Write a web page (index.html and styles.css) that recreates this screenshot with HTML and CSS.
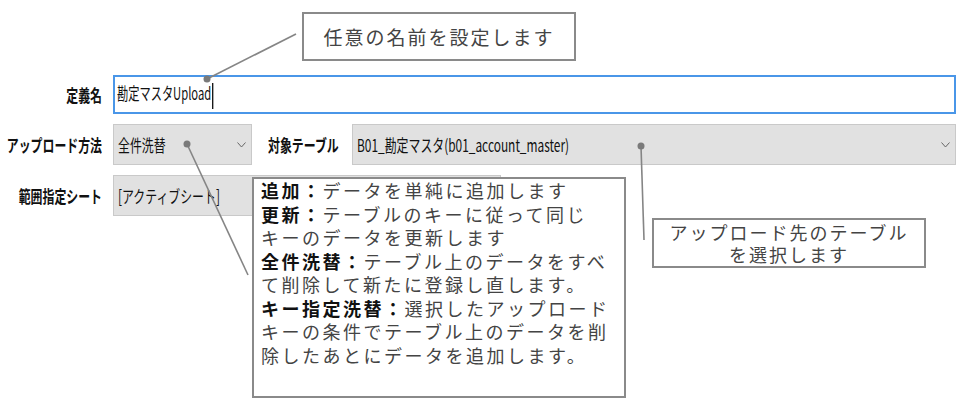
FILE: index.html
```html
<!DOCTYPE html>
<html lang="ja">
<head>
  <meta charset="UTF-8" />
  <meta name="viewport" content="width=device-width, initial-scale=1.0"/>
  <title>アップロード定義</title>
  <link rel="stylesheet" href="styles.css">
</head>
<body>
  <div class="page">
    <div class="form">
      <div class="label"><span class="narrow">定義名</span></div>
      <div class="field field-text">
        <span class="narrow">勘定マスタUpload<span class="caret"></span></span>
      </div>

      <div class="label"><span class="narrow">アップロード方法</span></div>
      <div class="field-row">
        <div class="field select select-mode">
          <span class="narrow">全件洗替</span>
          <svg class="chevron" width="9" height="6" viewBox="0 0 9 6"><path d="M0.5 0.5 L4.5 5 L8.5 0.5" fill="none" stroke="#666" stroke-width="1"/></svg>
        </div>
        <div class="label-inline"><span class="narrow">対象テーブル</span></div>
        <div class="field select select-table">
          <span class="narrow">B01_勘定マスタ(b01_account_master)</span>
          <svg class="chevron" width="9" height="6" viewBox="0 0 9 6"><path d="M0.5 0.5 L4.5 5 L8.5 0.5" fill="none" stroke="#666" stroke-width="1"/></svg>
        </div>
      </div>

      <div class="label"><span class="narrow">範囲指定シート</span></div>
      <div class="field-row">
        <div class="field select select-sheet">
          <span class="narrow">[アクティブシート]</span>
        </div>
      </div>
    </div>

    <!-- callouts -->
    <div class="note note-name">任意の名前を設定します</div>

    <div class="note note-mode">
      <b>追加：</b>データを単純に追加します<br>
      <b>更新：</b>テーブルのキーに従って同じ<br>
      キーのデータを更新します<br>
      <b>全件洗替：</b>テーブル上のデータをすべ<br>
      て削除して新たに登録し直します。<br>
      <b>キー指定洗替：</b>選択したアップロード<br>
      キーの条件でテーブル上のデータを削<br>
      除したあとにデータを追加します。
    </div>

    <div class="note note-table">アップロード先のテーブル<br>を選択します</div>

    <svg class="leaders" width="967" height="404" viewBox="0 0 967 404">
      <g stroke="#858585" stroke-width="1.6" fill="none">
        <line x1="207" y1="79" x2="296" y2="34"/>
        <line x1="187" y1="144" x2="248" y2="275"/>
        <line x1="641" y1="146" x2="644" y2="240"/>
      </g>
      <g fill="#7a7a7a">
        <circle cx="207" cy="79" r="3.5"/>
        <circle cx="187" cy="144" r="3.5"/>
        <circle cx="641" cy="146" r="3.5"/>
      </g>
    </svg>
  </div>
</body>
</html>
```

FILE: styles.css
```css
body {
  margin: 0;
  background: #fff;
  font-family: "Noto Sans CJK JP", "Noto Sans", sans-serif;
  color: #111;
}

.page {
  position: relative;
  width: 967px;
  height: 404px;
  overflow: hidden;
}

.form {
  display: grid;
  grid-template-columns: 102px 843px;
  grid-template-rows: 39px 41px 41px;
  column-gap: 11px;
  row-gap: 10px;
  padding-top: 75px;
  font-size: 17px;
}

.narrow {
  display: inline-block;
  white-space: nowrap;
  transform: scaleX(0.7);
  transform-origin: left center;
}

.label {
  display: flex;
  align-items: center;
  justify-content: flex-end;
  font-weight: bold;
}

.label .narrow {
  transform-origin: right center;
}

.label-inline {
  width: 72px;
  margin: 0 12px 0 16px;
  display: flex;
  align-items: center;
  font-weight: bold;
}

.field {
  box-sizing: border-box;
  display: flex;
  align-items: center;
  padding-left: 4px;
  height: 100%;
}

.field-text {
  border: 2px solid #4a96e8;
  background: #fff;
  padding-left: 2px;
}

.field-text .narrow {
  transform: scaleX(0.66);
}

.caret {
  display: inline-block;
  width: 0;
  height: 26px;
  border-left: 2px solid #111;
  margin-left: 1px;
  vertical-align: middle;
}

.field-row {
  display: flex;
  height: 41px;
}

.select {
  background: #e1e1e1;
  border: 1px solid #c9c9c9;
  justify-content: space-between;
  padding-right: 5px;
}

.select-mode {
  width: 139px;
}

.select-table {
  flex: 1;
}

.select-sheet {
  width: 388px;
}

.chevron {
  flex: none;
}

.note {
  position: absolute;
  box-sizing: border-box;
  background: #fff;
  border: 2px solid #8a8a8a;
  color: #444;
  font-size: 18px;
  letter-spacing: 2.5px;
  white-space: nowrap;
}

.note b {
  color: #111;
}

.note-name {
  left: 302px;
  top: 12px;
  width: 274px;
  height: 49px;
  display: flex;
  align-items: center;
  justify-content: center;
  font-size: 19px;
  letter-spacing: 2px;
}

.note-mode {
  left: 252px;
  top: 177px;
  width: 374px;
  height: 221px;
  padding: 0 0 0 7px;
  line-height: 23.5px;
}

.note-table {
  left: 652px;
  top: 218px;
  width: 274px;
  height: 50px;
  padding-top: 1px;
  line-height: 22px;
  text-align: center;
  letter-spacing: 2px;
}

.leaders {
  position: absolute;
  left: 0;
  top: 0;
  pointer-events: none;
}
```
